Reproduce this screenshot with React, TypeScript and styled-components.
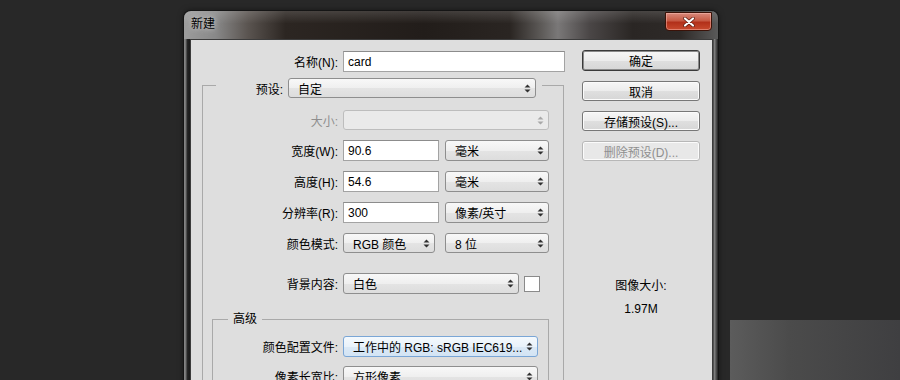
import React from "react";
import styled, { createGlobalStyle } from "styled-components";

const FONT = `"Liberation Sans", "Noto Sans CJK SC", sans-serif`;

const GlobalStyle = createGlobalStyle`
  html, body { margin: 0; padding: 0; background: #282828; }
  * { box-sizing: border-box; }
`;

const Desktop = styled.div`
  position: relative;
  width: 900px;
  height: 380px;
  overflow: hidden;
  background: #282828;
  padding: 11px 0 0 184px;
  font-family: ${FONT};
  font-size: 12px;
  color: #000;
`;

const BehindWindow = styled.div`
  position: absolute;
  left: 730px;
  top: 320px;
  width: 170px;
  height: 60px;
  background: linear-gradient(90deg, #5c5c5c 0%, #4b4b4b 35%, #3f3f41 100%);
`;

const Window = styled.div`
  position: relative;
  z-index: 1;
  width: 534px;
  height: 400px;
  display: flex;
  flex-direction: column;
  border-radius: 7px 7px 0 0;
  background: linear-gradient(
    90deg,
    #8a8a8a 0,
    #6e6e6e 2px,
    #2a2a2a 3px,
    #1c1c1c 5px,
    #1c1c1c calc(100% - 5px),
    #8a8a8a calc(100% - 4px),
    #222 100%
  );
  box-shadow: 0 0 0 1px #151515, 0 0 6px rgba(0, 0, 0, 0.6);
`;

const TitleBar = styled.div`
  height: 28px;
  display: flex;
  align-items: flex-start;
  justify-content: space-between;
  border-radius: 7px 7px 0 0;
  background: linear-gradient(180deg, rgba(255, 255, 255, 0.14), rgba(255, 255, 255, 0) 45%),
    linear-gradient(
      90deg,
      #9c9c9c 0,
      #888 6%,
      #5a5450 12%,
      #2c2622 19%,
      #221d1a 45%,
      #2a2522 61%,
      #5e5b59 67%,
      #7a7878 70%,
      #4a4646 76%,
      #2a2624 84%,
      #2e2a28 93%,
      #5a5a5a 100%
    );
`;

const TitleText = styled.span`
  padding-left: 7px;
  line-height: 27px;
  font-size: 12px;
  color: #000;
  text-shadow: 0 0 5px #d0d0d0, 0 0 9px #b0b0b0;
`;

const CloseButton = styled.div`
  width: 47px;
  height: 19px;
  margin: 1px 6px 0 0;
  display: flex;
  align-items: center;
  justify-content: center;
  border: 1px solid #3a1208;
  border-radius: 0 0 4px 4px;
  background: linear-gradient(180deg, #d98a7c 0%, #c65a44 45%, #b2301a 55%, #c84a2e 100%);
  box-shadow: inset 0 0 0 1px rgba(255, 200, 190, 0.45);
`;

const Client = styled.div`
  flex: 1;
  margin: 0 5px 0 6px;
  background: #dedede;
  border: 1px solid #3c3c3c;
  display: flex;
  align-items: flex-start;
`;

const LeftCol = styled.div`
  width: 375px;
  padding: 11px 0 0 11px;
  display: flex;
  flex-direction: column;
`;

const RightCol = styled.div`
  width: 118px;
  margin-left: 16px;
  padding-top: 10px;
  display: flex;
  flex-direction: column;
  align-items: stretch;
`;

const Row = styled.div<{ $h?: number; $mb?: number }>`
  display: flex;
  align-items: center;
  height: ${(p) => p.$h ?? 21}px;
  margin-bottom: ${(p) => p.$mb ?? 0}px;
`;

const Label = styled.span<{ $w: number; $disabled?: boolean }>`
  width: ${(p) => p.$w}px;
  margin-right: 5px;
  text-align: right;
  white-space: nowrap;
  color: ${(p) => (p.$disabled ? "#8e8e8e" : "#000")};
`;

const TextInput = styled.div<{ $w: number }>`
  width: ${(p) => p.$w}px;
  height: 100%;
  display: flex;
  align-items: center;
  padding-left: 4px;
  background: #fff;
  border: 1px solid #a3a3a3;
  border-top-color: #8c8c8c;
`;

const Select = styled.div<{ $w: number; $disabled?: boolean; $focus?: boolean; $ml?: number }>`
  width: ${(p) => p.$w}px;
  height: 100%;
  margin-left: ${(p) => p.$ml ?? 0}px;
  display: flex;
  align-items: center;
  justify-content: space-between;
  padding: 0 4px 0 9px;
  border: 1px solid ${(p) => (p.$disabled ? "#bdbdbd" : p.$focus ? "#7aa6d6" : "#8e8e8e")};
  border-radius: 3px;
  white-space: nowrap;
  color: ${(p) => (p.$disabled ? "#999" : "#000")};
  background: ${(p) =>
    p.$disabled
      ? "#eaeaea"
      : p.$focus
      ? "linear-gradient(180deg, #f4f9fd 0%, #e9f2fa 50%, #dbe9f6 51%, #d3e4f4 100%)"
      : "linear-gradient(180deg, #f8f8f8 0%, #efefef 50%, #e4e4e4 51%, #dddddd 100%)"};
`;

const ArrowSvg = styled.svg<{ $disabled?: boolean }>`
  flex: none;
  fill: ${(p) => (p.$disabled ? "#a8a8a8" : "#303030")};
`;

const Arrows = ({ disabled }: { disabled?: boolean }) => (
  <ArrowSvg width="7" height="9" viewBox="0 0 7 9" $disabled={disabled}>
    <path d="M0.5 3.6 L3.5 0.6 L6.5 3.6 Z M0.5 5.4 L3.5 8.4 L6.5 5.4 Z" />
  </ArrowSvg>
);

const Swatch = styled.div`
  width: 16px;
  height: 16px;
  margin-left: 5px;
  background: #fff;
  border: 1px solid #8a8a8a;
`;

const Group = styled.fieldset<{ $ml?: number; $w: number; $pt: number; $mt?: number }>`
  margin: ${(p) => p.$mt ?? 0}px 0 0 ${(p) => p.$ml ?? 0}px;
  padding: ${(p) => p.$pt}px 0 0 0;
  width: ${(p) => p.$w}px;
  min-width: 0;
  border: 1px solid #a9a9a9;
`;

const PresetLegend = styled.legend`
  margin-left: 13px;
  padding: 6px 6px 0 0;
`;

const LegendRow = styled.div`
  display: flex;
  align-items: center;
  height: 20px;
`;

const TextLegend = styled.legend`
  margin-left: 15px;
  padding: 0 5px;
  line-height: 16px;
`;

const Button = styled.div<{ $primary?: boolean; $disabled?: boolean; $h?: number }>`
  height: ${(p) => p.$h ?? 20}px;
  margin-bottom: 10px;
  display: flex;
  align-items: center;
  justify-content: center;
  border-radius: 3px;
  border: 1px solid ${(p) => (p.$primary ? "#3a3a3a" : p.$disabled ? "#b7b7b7" : "#777")};
  box-shadow: ${(p) => (p.$primary ? "inset 0 0 0 1px #8a8a8a" : "inset 0 0 0 1px #fbfbfb")};
  background: ${(p) =>
    p.$disabled
      ? "#e8e8e8"
      : "linear-gradient(180deg, #f6f6f6 0%, #ececec 50%, #dfdfdf 51%, #d6d6d6 100%)"};
  color: ${(p) => (p.$disabled ? "#8f8f8f" : "#000")};
  white-space: nowrap;
`;

const Info = styled.div`
  margin-top: 107px;
  display: flex;
  flex-direction: column;
  align-items: center;
  gap: 7px;
  line-height: 16px;
`;

export default function App() {
  return (
    <Desktop>
      <GlobalStyle />
      <BehindWindow />
      <Window>
        <TitleBar>
          <TitleText>新建</TitleText>
          <CloseButton>
            <svg width="12" height="10" viewBox="0 0 12 10">
              <path d="M2 1.5 L10 8.5 M10 1.5 L2 8.5" stroke="#5a1a10" strokeWidth="3.6" strokeLinecap="round" />
              <path d="M2 1.5 L10 8.5 M10 1.5 L2 8.5" stroke="#fff" strokeWidth="2.2" strokeLinecap="round" />
            </svg>
          </CloseButton>
        </TitleBar>
        <Client>
          <LeftCol>
            <Row $h={21}>
              <Label $w={136}>名称(N):</Label>
              <TextInput $w={222}>card</TextInput>
            </Row>

            <Group $w={362} $pt={12}>
              <PresetLegend>
                <LegendRow>
                  <Label $w={67}>预设:</Label>
                  <Select $w={248}>
                    <span>自定</span>
                    <Arrows />
                  </Select>
                </LegendRow>
              </PresetLegend>

              <Row $h={20} $mb={10}>
                <Label $w={135} $disabled>大小:</Label>
                <Select $w={206} $disabled>
                  <span />
                  <Arrows disabled />
                </Select>
              </Row>
              <Row $mb={10}>
                <Label $w={135}>宽度(W):</Label>
                <TextInput $w={96}>90.6</TextInput>
                <Select $w={104} $ml={6}>
                  <span>毫米</span>
                  <Arrows />
                </Select>
              </Row>
              <Row $mb={10}>
                <Label $w={135}>高度(H):</Label>
                <TextInput $w={96}>54.6</TextInput>
                <Select $w={104} $ml={6}>
                  <span>毫米</span>
                  <Arrows />
                </Select>
              </Row>
              <Row $mb={10}>
                <Label $w={135}>分辨率(R):</Label>
                <TextInput $w={96}>300</TextInput>
                <Select $w={104} $ml={6}>
                  <span>像素/英寸</span>
                  <Arrows />
                </Select>
              </Row>
              <Row $h={20} $mb={20}>
                <Label $w={135}>颜色模式:</Label>
                <Select $w={92}>
                  <span>RGB 颜色</span>
                  <Arrows />
                </Select>
                <Select $w={104} $ml={10}>
                  <span>8 位</span>
                  <Arrows />
                </Select>
              </Row>
              <Row>
                <Label $w={135}>背景内容:</Label>
                <Select $w={176}>
                  <span>白色</span>
                  <Arrows />
                </Select>
                <Swatch />
              </Row>

              <Group $w={337} $ml={9} $mt={17} $pt={9}>
                <TextLegend>高级</TextLegend>
                <Row $mb={9}>
                  <Label $w={125}>颜色配置文件:</Label>
                  <Select $w={195} $focus>
                    <span>工作中的 RGB: sRGB IEC619...</span>
                    <Arrows />
                  </Select>
                </Row>
                <Row>
                  <Label $w={125}>像素长宽比:</Label>
                  <Select $w={195}>
                    <span>方形像素</span>
                    <Arrows />
                  </Select>
                </Row>
              </Group>
            </Group>
          </LeftCol>

          <RightCol>
            <Button $primary $h={21}>确定</Button>
            <Button>取消</Button>
            <Button>存储预设(S)...</Button>
            <Button $disabled>删除预设(D)...</Button>
            <Info>
              <span>图像大小:</span>
              <span>1.97M</span>
            </Info>
          </RightCol>
        </Client>
      </Window>
    </Desktop>
  );
}
